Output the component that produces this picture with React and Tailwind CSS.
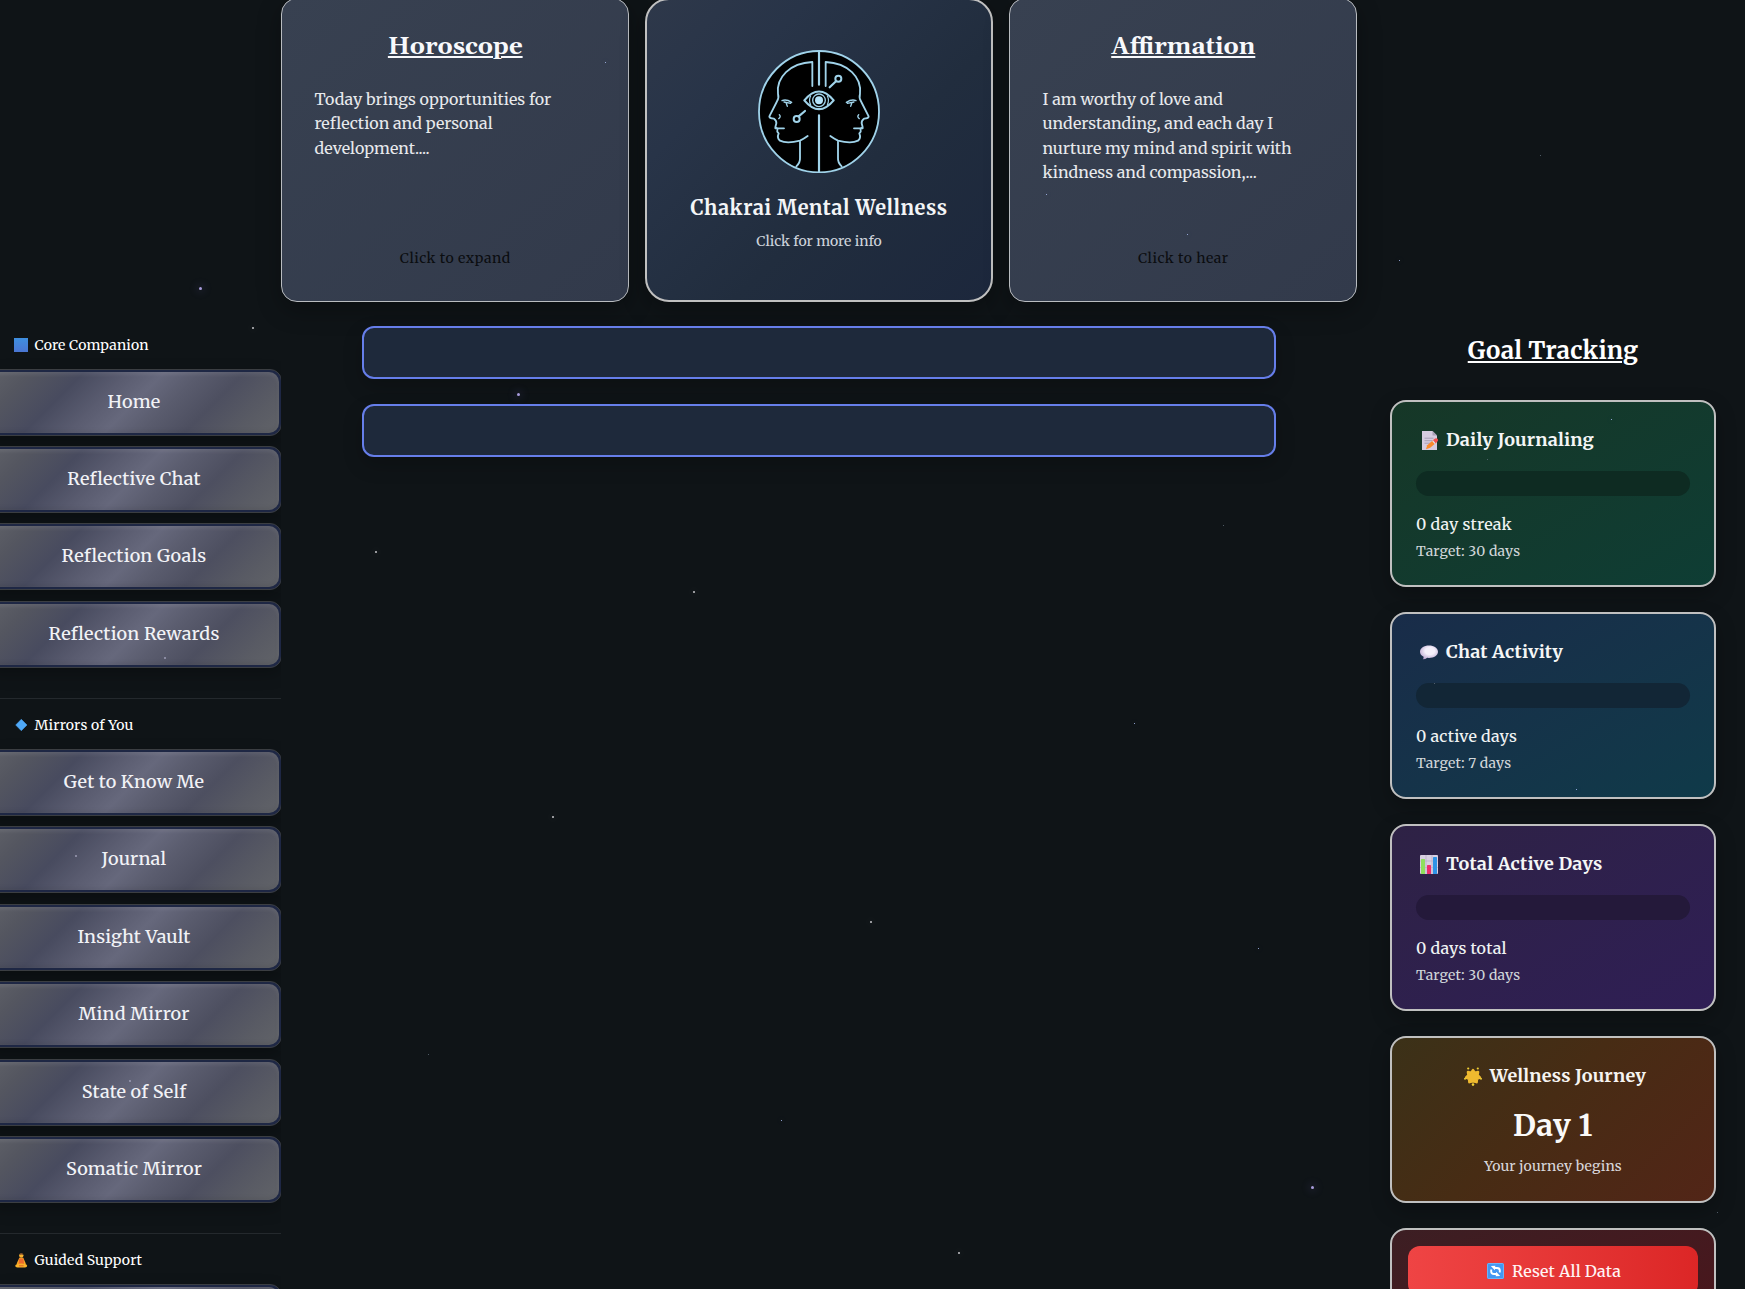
import React from "react";

const STARS = [
  ["left-[605px] top-[62px]", "s"],
  ["left-[199px] top-[287px]", "b"],
  ["left-[252px] top-[327px]", "m"],
  ["left-[517px] top-[393px]", "b"],
  ["left-[375px] top-[551px]", "m"],
  ["left-[693px] top-[591px]", "m"],
  ["left-[1223px] top-[525px]", "f"],
  ["left-[1134px] top-[723px]", "s"],
  ["left-[552px] top-[816px]", "m"],
  ["left-[870px] top-[921px]", "m"],
  ["left-[1258px] top-[948px]", "s"],
  ["left-[428px] top-[1054px]", "f"],
  ["left-[781px] top-[1120px]", "s"],
  ["left-[1311px] top-[1186px]", "b"],
  ["left-[958px] top-[1252px]", "m"],
  ["left-[1540px] top-[155px]", "f"],
  ["left-[1399px] top-[260px]", "s"],
  ["left-[1046px] top-[194px]", "s"],
  ["left-[1187px] top-[234px]", "s"],
  ["left-[1611px] top-[419px]", "s"],
  ["left-[1487px] top-[459px]", "f"],
  ["left-[1576px] top-[789px]", "s"],
  ["left-[75px] top-[855px]", "d"],
  ["left-[164px] top-[657px]", "d"],
  ["left-[129px] top-[1080px]", "d"],
  ["left-[1434px] top-[683px]", "f"],
  ["left-[1717px] top-[1212px]", "f"],
];

const STAR_KIND = {
  b: "h-[3px] w-[3px] bg-[#a89cdc] shadow-[0_0_8px_3px_rgba(120,110,200,0.12)]",
  m: "h-[2px] w-[2px] bg-[#c4c4c8] shadow-[0_0_8px_2px_rgba(255,255,255,0.06)]",
  s: "h-px w-px bg-[#b4c8ff] shadow-[0_0_6px_1px_rgba(160,180,255,0.08)]",
  d: "h-[2px] w-[2px] bg-[#9c9db5]",
  f: "h-px w-px bg-[#66727f]",
};

function Stars() {
  return (
    <div className="pointer-events-none absolute inset-0 z-10">
      {STARS.map(([pos, kind]) => (
        <span key={pos} className={`absolute rounded-full ${pos} ${STAR_KIND[kind]}`} />
      ))}
    </div>
  );
}

function Profile() {
  return (
    <>
      <path d="M187 136V64C120 67 78 110 84 160Q88 172 80 184L58 227Q58 234 72 234Q80 240 79 248L76 260Q84 263 82 268Q80 272 86 278Q80 292 90 300Q110 310 150 300Q162 294 173 286" />
      <path d="M76 263H102M150 303V352Q151 366 139 377" />
      <path d="M96 180Q108 174 125 185M102 184L122 188M108 186L112 197M88 222Q94 228 86 234" strokeWidth="4" />
    </>
  );
}

function Logo() {
  return (
    <svg className="mt-[50px] h-[123px] w-[122px] shrink-0" viewBox="24 28 366 369" fill="none" stroke="#a0d3ea" strokeWidth="5.5" strokeLinecap="round" strokeLinejoin="round">
      <ellipse cx="207" cy="213" rx="180" ry="182" fill="#000" />
      <path d="M207 32V132M207 224V394" strokeWidth="6.5" />
      <Profile />
      <g transform="translate(414 0) scale(-1 1)">
        <Profile />
      </g>
      <path d="M163 179Q207 126 251 179Q207 232 163 179Z" strokeWidth="6.5" fill="#000" />
      <circle cx="207" cy="179" r="19" strokeWidth="4" />
      <circle cx="207" cy="179" r="12" fill="#b5e4fb" stroke="none" />
      <path d="M182 166Q175 179 182 192M232 166Q239 179 232 192" strokeWidth="3.500" />
      <circle cx="265" cy="114" r="9" strokeWidth="6" />
      <path d="M258 122L239 140M146 227L165 211" strokeWidth="6.5" />
      <circle cx="140" cy="235" r="9" strokeWidth="6" />
    </svg>
  );
}

const icon = "h-[19px] w-[18px] shrink-0";

function MemoIcon() {
  return (
    <svg className={icon} viewBox="0 0 18 19">
      <path d="M2 0h10.500l4.500 4.500V19H2z" fill="#d6cce0" />
      <path d="M12.500 0v4.500H17z" fill="#a99fb6" />
      <path d="M4.500 7.200h9M4.500 9.700h8M4.500 12.200h6" stroke="#a99fb5" strokeWidth="1" />
      <path d="M6 18.300l1.200-4 7-6 2.500 3-6.500 5.500z" fill="#fb8b2c" />
      <path d="M12.500 9.800l2.500-2.300q1.500-.8 2.500.3t.2 2.400l-2.500 2.300z" fill="#f4504f" />
      <path d="M12.100 10.100l1-.8 2.500 2.900-1 .8z" fill="#dfe3ee" />
    </svg>
  );
}

function ChatIcon() {
  return (
    <svg className={icon} viewBox="0 0 18 19">
      <defs>
        <radialGradient id="bubble" cx=".55" cy=".4" r=".65">
          <stop offset=".4" stopColor="#f5f0fb" />
          <stop offset="1" stopColor="#b9a3cf" />
        </radialGradient>
      </defs>
      <path d="M9 2.500c5 0 9 2.700 9 6.200s-4 6.200-9 6.200l-1.800-.1Q5.500 16.300 2.800 16.300q1-1 .8-2.600Q0 12 0 8.700C0 5.200 4 2.500 9 2.500z" fill="url(#bubble)" />
    </svg>
  );
}

function ChartIcon() {
  return (
    <svg className={icon} viewBox="0 0 18 19">
      <rect width="18" height="19" rx="1" fill="#d9d0e2" />
      <path d="M0 6h18M0 12.500h18M6 0v19M12 0v19" stroke="#b8aec4" strokeWidth=".7" />
      <rect x="1" y="4" width="4" height="15" rx=".6" fill="#8fdf5c" />
      <rect x="7" y="10" width="4" height="9" rx=".6" fill="#ee2c6c" />
      <rect x="13" y="2" width="4" height="17" rx=".6" fill="#2e93e6" />
    </svg>
  );
}

function StarIcon() {
  return (
    <svg className={icon} viewBox="0 0 18 19">
      <path d="M9 3.200l1.800 2.700 3.200-.8-.5 3.200 2.300 2.200-2.900 1.400-.3 3.200L9 14.200l-3.600.9-.3-3.200-2.900-1.400 2.300-2.200-.5-3.200 3.200.8z" fill="#efb92f" stroke="#efb92f" strokeWidth="2.600" strokeLinejoin="round" />
      <g fill="#f0cf35">
        <circle cx="4.200" cy="1.500" r="1.100" />
        <circle cx="13.800" cy="1.500" r="1.100" />
        <circle cx="1" cy="11.800" r="1" />
        <circle cx="17" cy="11.800" r="1" />
        <circle cx="9" cy="17.600" r="1.300" />
      </g>
    </svg>
  );
}

function ResetIcon() {
  return (
    <svg className="h-4 w-[17px] shrink-0" viewBox="0 0 17 16">
      <rect width="17" height="16" rx="1.500" fill="#4397f2" />
      <rect x=".5" y=".5" width="16" height="15" rx="1.300" fill="none" stroke="#7cc0fb" strokeWidth=".7" />
      <path d="M12.800 9.500V7.500Q12.800 5 10 5H7M4.200 6.500v2Q4.200 11 7 11h3" fill="none" stroke="#fff" strokeWidth="1.900" />
      <path d="M3.800 3L8.300 2.700 7.900 7.300zM13.200 13L8.700 13.300 9.100 8.700z" fill="#fff" />
    </svg>
  );
}

function SquareIcon() {
  return <span className="h-3.5 w-3.5 bg-linear-to-b from-[#3e8fdf] to-[#4a76d3]" />;
}

function DiamondIcon() {
  return (
    <svg className="h-3.5 w-3.5" viewBox="0 0 14 14">
      <path d="M7.300 1.300l5.700 5.700-5.700 5.700L1.700 7z" fill="#4fa9f8" stroke="#4fa9f8" strokeWidth=".5" strokeLinejoin="round" />
    </svg>
  );
}

function LotusIcon() {
  return (
    <svg className="h-[15px] w-3.5" viewBox="0 0 14 15">
      <circle cx="7.300" cy="2.600" r="2.200" fill="#f7b32e" />
      <path d="M5.700.8Q7.300-.6 8.900.8L9.200 2Q7.300 1 5.500 2z" fill="#7b4a2a" />
      <path d="M5.300 4.800h4l2.600 6-2 .9H4.600l-2-.9z" fill="#f9a825" />
      <path d="M5.300 5.500h4l.8 5.500H4.500z" fill="#ee6a2b" />
      <path d="M1.200 12.800Q2 10.500 7.300 10.500t5.900 2.300q0 1.700-2.200 1.700H3.400q-2.200 0-2.200-1.700z" fill="#fbb32a" />
      <path d="M5 12.300h4.600v1H5z" fill="#e0632a" />
    </svg>
  );
}

function NavSection({ className, icon: Icon, label, items }) {
  return (
    <section className={`shrink-0 border-[#24292d] ${className}`}>
      <h3 className="flex h-5 items-center gap-[6.500px] pl-3.5 text-sm leading-5 tracking-[0.17px] text-white">
        <Icon />
        {label}
      </h3>
      <div className="mt-[14px] -ml-3.5 flex w-[296px] flex-col gap-[10.400px]">
        {items.map((t) => (
          <button key={t} className="h-[67px] shrink-0 rounded-xl border border-[#3b3e42] bg-[#1e2744] p-[2px] shadow-[0_6px_16px_rgba(0,0,0,0.25)]">
            <span className="flex h-full items-center justify-center rounded-[10px] bg-[linear-gradient(135deg,#5f6168_0%,#545660_12%,#484b5f_27%,#5a5c70_40%,#66687c_50%,#5a5c6e_60%,#4d4f60_73%,#595b64_88%,#616368_100%)] pb-px text-lg font-medium tracking-[0.18px] text-[#f1f2f6] shadow-[inset_0_2px_4px_rgba(255,255,255,0.1),inset_0_-2px_4px_rgba(0,0,0,0.08)]">
              {t}
            </span>
          </button>
        ))}
      </div>
    </section>
  );
}

function InfoCard({ title, body, action }) {
  return (
    <article className="flex w-[348px] flex-col rounded-2xl border border-[#b9bcc0] bg-linear-to-br from-[#384151] to-[#323a4b] pt-[33px] pr-8 pb-[33px] pl-[32.500px] shadow-[0_8px_24px_rgba(0,0,0,0.3)]">
      <h2 className="text-center [font-family:Gelasio,Georgia,'DejaVu_Serif',serif] text-2xl leading-[30px] font-bold text-[#f8f9fc] underline decoration-2 underline-offset-2">{title}</h2>
      <p className="mt-[25px] text-base leading-[24.400px] text-[#e7e9ec]">{body}</p>
      <span className="mt-auto text-center text-sm leading-5 tracking-[0.5px] text-[#0b0d10]">{action}</span>
    </article>
  );
}

function GoalCard({ className, icon: Icon, title, bar, value, target }) {
  return (
    <article className={`h-[187px] shrink-0 rounded-2xl border-2 border-[#c0c0c0] px-6 pt-6 shadow-[0_8px_20px_rgba(0,0,0,0.25)] ${className}`}>
      <h3 className="flex h-7 items-center gap-2 pl-1 text-lg leading-7 font-bold tracking-[0.18px] text-[#f4f6f6]">
        <Icon />
        {title}
      </h3>
      <div className={`mt-[17px] h-[25px] rounded-full ${bar}`} />
      <p className="mt-4 text-base leading-6 font-medium tracking-[0.18px] text-[#f0f3f3]">{value}</p>
      <p className="mt-[5px] text-sm leading-5 tracking-[0.15px] text-[#d0d6d9]">{target}</p>
    </article>
  );
}

export default function App() {
  return (
    <div className="relative flex h-[1289px] w-[1745px] flex-col overflow-hidden bg-[#0f1417] font-[Merriweather,'Noto_Serif','DejaVu_Serif_Condensed',serif]">
      <header className="-mt-0.5 flex h-[304px] shrink-0 gap-4 pl-[281px]">
        <InfoCard title="Horoscope" body="Today brings opportunities for reflection and personal development...." action="Click to expand" />
        <article className="flex w-[348px] flex-col items-center rounded-3xl border-2 border-[#c0c0c0] bg-[linear-gradient(135deg,#2e384a_0%,#283448_25%,#212d3e_60%,#1c273c_100%)] shadow-[0_8px_24px_rgba(0,0,0,0.3)]">
          <Logo />
          <h1 className="mt-[21px] text-xl leading-7 font-bold tracking-[0.5px] text-[#f3f5f7]">Chakrai Mental Wellness</h1>
          <p className="mt-[9px] text-sm leading-5 text-[#cdd3db]">Click for more info</p>
        </article>
        <InfoCard title="Affirmation" body="I am worthy of love and understanding, and each day I nurture my mind and spirit with kindness and compassion,..." action="Click to hear" />
      </header>

      <div className="flex min-h-0 flex-1">
        <nav className="flex w-[281px] shrink-0 flex-col overflow-hidden">
          <NavSection className="h-[396px] pt-[32.600px]" icon={SquareIcon} label="Core Companion" items={["Home", "Reflective Chat", "Reflection Goals", "Reflection Rewards"]} />
          <NavSection className="h-[535px] border-t pt-4" icon={DiamondIcon} label="Mirrors of You" items={["Get to Know Me", "Journal", "Insight Vault", "Mind Mirror", "State of Self", "Somatic Mirror"]} />
          <NavSection className="border-t pt-4" icon={LotusIcon} label="Guided Support" items={[""]} />
        </nav>

        <main className="flex w-[1109px] shrink-0 flex-col gap-[25px] pt-6 pr-[114px] pl-[81px]">
          <div className="h-[53px] shrink-0 rounded-xl border-2 border-[#667eea] bg-[#1e293b] shadow-[0_8px_20px_rgba(0,0,0,0.2)]" />
          <div className="h-[53px] shrink-0 rounded-xl border-2 border-[#667eea] bg-[#1e293b] shadow-[0_8px_20px_rgba(0,0,0,0.2)]" />
        </main>

        <aside className="flex w-[326px] shrink-0 flex-col gap-[25px]">
          <h2 className="mt-[33px] mb-2 text-center text-2xl leading-8 font-bold tracking-[0.2px] text-white underline decoration-2 underline-offset-2">Goal Tracking</h2>
          <GoalCard className="bg-linear-to-br from-[#163727] to-[#0e3d34]" icon={MemoIcon} title="Daily Journaling" bar="bg-[#0e2b22]" value="0 day streak" target="Target: 30 days" />
          <GoalCard className="bg-linear-to-br from-[#192c49] to-[#0f3a49]" icon={ChatIcon} title="Chat Activity" bar="bg-[#122636]" value="0 active days" target="Target: 7 days" />
          <GoalCard className="bg-linear-to-br from-[#2e2245] to-[#2f1e55]" icon={ChartIcon} title="Total Active Days" bar="bg-[#24193a]" value="0 days total" target="Target: 30 days" />
          <article className="flex h-[167px] shrink-0 flex-col items-center rounded-2xl border-2 border-[#c0c0c0] bg-[linear-gradient(135deg,#3b3118_0%,#472c14_45%,#522517_100%)] pt-6 shadow-[0_8px_20px_rgba(0,0,0,0.25)]">
            <h3 className="flex h-7 items-center gap-2 pl-1 text-lg leading-7 font-bold tracking-[0.18px] text-[#f6f4f1]">
              <StarIcon />
              Wellness Journey
            </h3>
            <p className="mt-[17px] text-3xl leading-9 font-bold tracking-[0.4px] text-[#faf9f8]">Day 1</p>
            <p className="mt-[13px] text-sm leading-5 tracking-[0.12px] text-[#d8d6da]">Your journey begins</p>
          </article>
          <article className="h-[120px] shrink-0 rounded-2xl border-2 border-[#c0c0c0] bg-linear-to-br from-[#3c1e23] to-[#4c141b] p-4">
            <button className="flex h-[50px] w-full items-center justify-center gap-2 rounded-xl bg-linear-to-r from-[#ef4444] to-[#dc2626] pl-0.5 text-base font-medium tracking-[0.15px] text-[#fff4f4]">
              <ResetIcon />
              Reset All Data
            </button>
          </article>
        </aside>
      </div>
      <Stars />
    </div>
  );
}
